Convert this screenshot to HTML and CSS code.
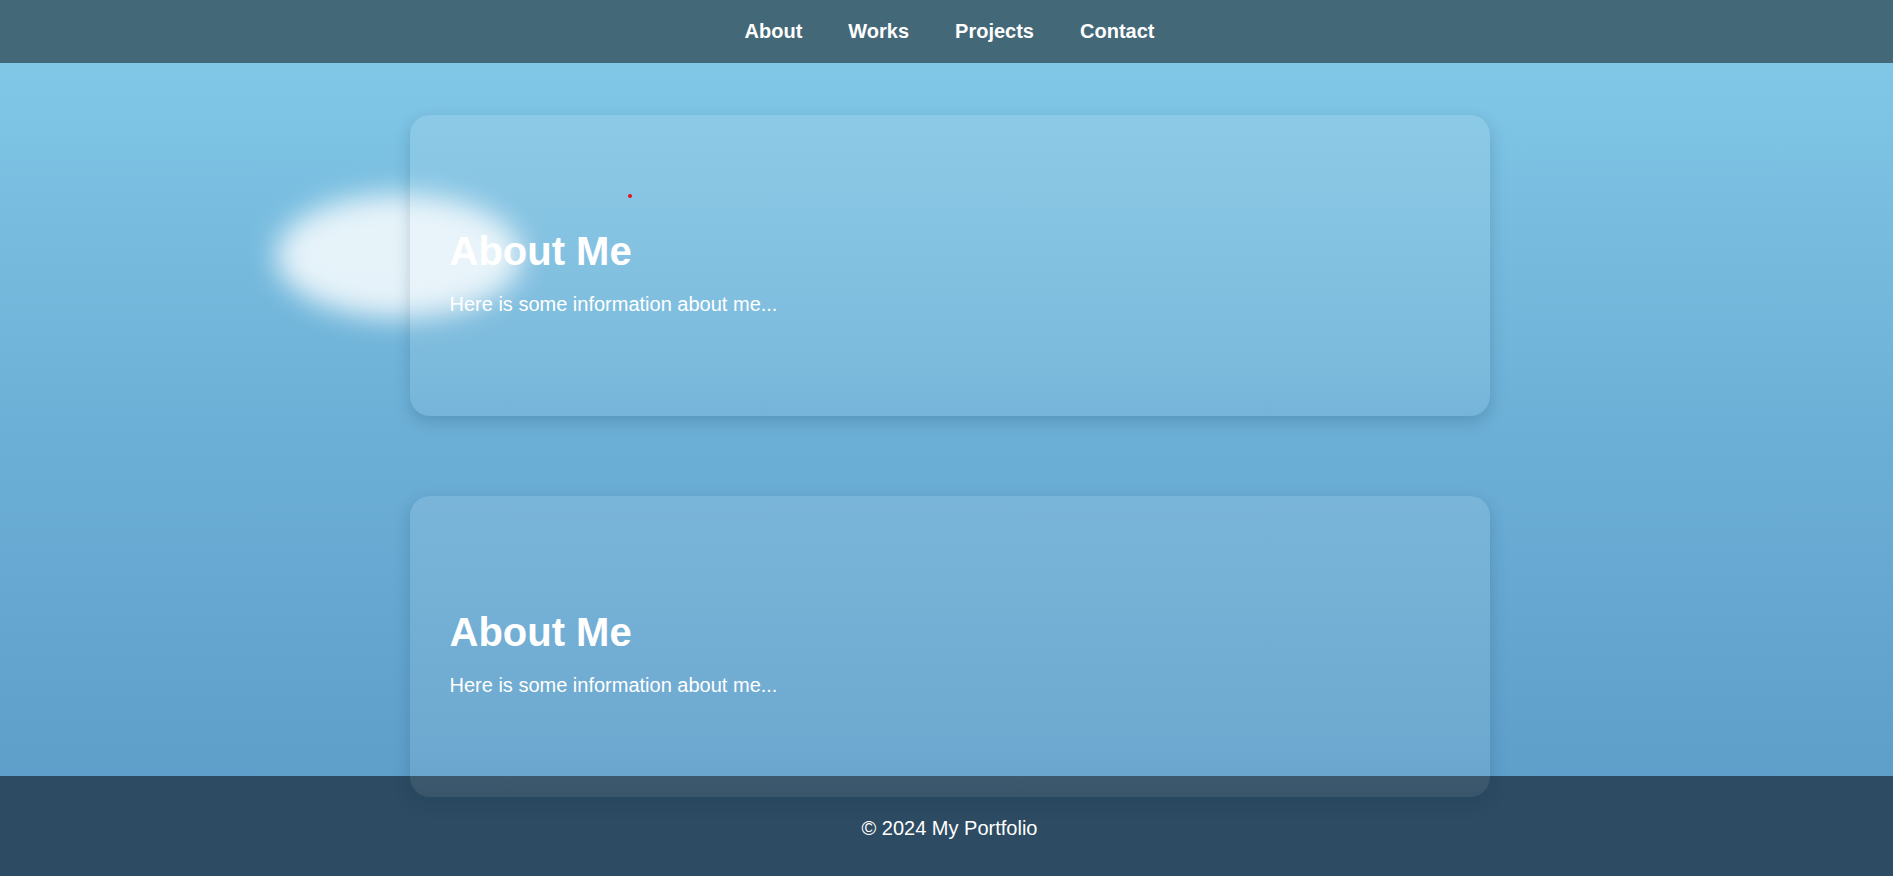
FILE: index.html
```html
<!DOCTYPE html>
<html lang="en">
<head>
<meta charset="utf-8">
<title>My Portfolio</title>
<link rel="stylesheet" href="styles.css">
</head>
<body>
<header class="site-header">
  <nav class="nav">
    <a class="nav-link" href="#about">About</a>
    <a class="nav-link" href="#works">Works</a>
    <a class="nav-link" href="#projects">Projects</a>
    <a class="nav-link" href="#contact">Contact</a>
  </nav>
</header>
<div class="cloud"></div>
<main class="main">
  <section class="card" id="about">
    <span class="dot"></span>
    <h1 class="card-title">About Me</h1>
    <p class="card-text">Here is some information about me...</p>
  </section>
  <section class="card">
    <h1 class="card-title">About Me</h1>
    <p class="card-text">Here is some information about me...</p>
  </section>
</main>
<footer class="site-footer">
  <p class="footer-text">&copy; 2024 My Portfolio</p>
</footer>
</body>
</html>
```

FILE: styles.css
```css
* { box-sizing: border-box; }
html, body { margin: 0; padding: 0; }
body {
  font-family: "Liberation Sans", Arial, sans-serif;
  color: #fff;
  height: 876px;
  overflow: hidden;
  display: flex;
  flex-direction: column;
  background: linear-gradient(to bottom, #84cbe9 0%, #6cafd6 50%, #5a9ac7 100%);
  position: relative;
}
.site-header {
  height: 63px;
  flex: 0 0 63px;
  background: #436878;
  display: flex;
  align-items: center;
  justify-content: center;
  padding-left: 6px;
}
.nav {
  display: flex;
  gap: 46px;
}
.nav-link {
  color: #fff;
  text-decoration: none;
  font-weight: bold;
  font-size: 20px;
}
.cloud {
  position: absolute;
  left: 276px;
  top: 194px;
  width: 246px;
  height: 124px;
  border-radius: 50%;
  background: rgba(255, 255, 255, 0.82);
  filter: blur(14px);
}
.main {
  flex: 1 1 auto;
  height: 713px;
  padding-top: 52px;
  padding-left: 6px;
  display: flex;
  flex-direction: column;
  align-items: center;
  gap: 80px;
}
.card {
  position: relative;
  z-index: 2;
  width: 1080px;
  height: 301px;
  flex: 0 0 301px;
  padding: 113px 40px 0;
  border-radius: 20px;
  background: linear-gradient(to bottom, rgba(255, 255, 255, 0.11) 0%, rgba(255, 255, 255, 0.09) 85%, rgba(255, 255, 255, 0.06) 100%);
  box-shadow: 0 6px 16px rgba(20, 60, 90, 0.22);
}
.dot {
  position: absolute;
  left: 218px;
  top: 79px;
  width: 4px;
  height: 4px;
  border-radius: 50%;
  background: #e8141c;
}
.card-title {
  margin: 0 0 19px;
  font-size: 40px;
  line-height: 46px;
  font-weight: bold;
}
.card-text {
  margin: 0;
  font-size: 20px;
  line-height: 23px;
}
.site-footer {
  flex: 0 0 100px;
  height: 100px;
  background: #2d4b62;
  display: flex;
  align-items: center;
  justify-content: center;
  padding-left: 6px;
  padding-top: 4px;
  position: relative;
  z-index: 1;
}
.footer-text {
  margin: 0;
  font-size: 20px;
}
```
